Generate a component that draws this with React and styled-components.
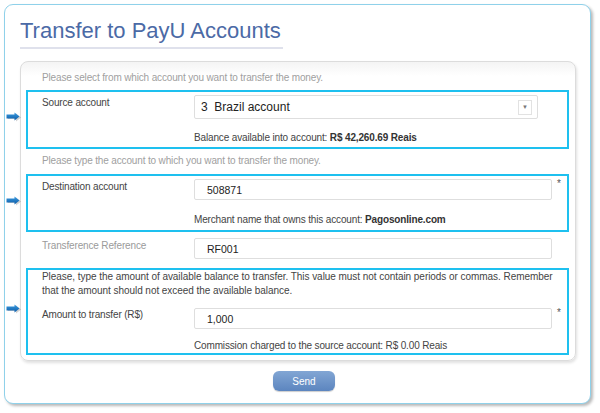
import styled, { createGlobalStyle } from "styled-components";

const GlobalStyle = createGlobalStyle`
  html, body {
    margin: 0;
    padding: 0;
    background: #ffffff;
  }
  body {
    font-family: "Liberation Sans", Arial, sans-serif;
    color: #444;
  }
`;

const Page = styled.div`
  padding: 4px 9px 11px 4px;
`;

const Card = styled.div`
  width: 587px;
  box-sizing: border-box;
  border: 1px solid #8fd1ea;
  border-radius: 9px;
  box-shadow: 2px 2px 3px rgba(0, 0, 0, 0.28);
  padding: 13px 14px 12px 15px;
  background: #fff;
`;

const Title = styled.h1`
  display: inline-block;
  margin: 0 0 12px 0;
  padding: 0 2px 3px 0;
  font-size: 22px;
  line-height: 26px;
  font-weight: normal;
  color: #4b6aa6;
  border-bottom: 2px solid #dfe1ec;
`;

const Panel = styled.div`
  border: 1px solid #dcdcdc;
  border-radius: 8px;
  background: linear-gradient(#f4f4f4, #fff 14px);
  box-shadow: 1px 2px 3px rgba(0, 0, 0, 0.12);
  padding: 9px 6px 5px 5px;
`;

const small = `
  font-size: 10px;
  letter-spacing: -0.15px;
  line-height: 14px;
`;

const Hint = styled.div`
  ${small}
  color: #a0a0a0;
  padding: ${(p) => p.$pad || "0 0 0 16px"};
`;

const Box = styled.div`
  position: relative;
  border: 2px solid #1ec0ef;
  padding: ${(p) => p.$pad || "3px 0 2px 14px"};
  margin-top: ${(p) => p.$top || "5px"};
`;

const Arrow = styled.svg`
  position: absolute;
  left: -22px;
  top: ${(p) => p.$top || "20px"};
`;

const Row = styled.div`
  display: grid;
  grid-template-columns: 152px ${(p) => p.$w || "358px"} 1fr;
  align-items: start;
  margin-top: ${(p) => p.$top || "0"};
  padding-left: ${(p) => p.$indent || "0"};
`;

const Label = styled.div`
  ${small}
  padding-top: ${(p) => p.$pt || "1px"};
  color: ${(p) => (p.$muted ? "#9a9a9a" : "#444")};
`;

const Input = styled.div`
  box-sizing: border-box;
  height: ${(p) => p.$h || "21px"};
  border: 1px solid #dedede;
  border-radius: 2px;
  background: #fff;
  padding: 0 12px;
  display: flex;
  align-items: center;
  font-size: ${(p) => p.$fs || "10.5px"};
  color: #222;
`;

const Select = styled(Input)`
  justify-content: space-between;
  padding: 0 5px 0 6px;
`;

const SelectBtn = styled.div`
  width: 12px;
  height: 13px;
  border: 1px solid #e2e2e2;
  display: flex;
  align-items: center;
  justify-content: center;
  font-size: 6px;
  color: #777;
`;

const Star = styled.span`
  font-size: 10px;
  color: #555;
  padding-left: 5px;
  line-height: 10px;
`;

const Info = styled.div`
  ${small}
  color: #444;
  margin-top: ${(p) => p.$top || "11px"};
  padding-left: 152px;

  b {
    color: #333;
  }
`;

const Notice = styled.div`
  ${small}
  letter-spacing: -0.05px;
  color: #444;
  padding-right: 9px;
`;

const Footer = styled.div`
  display: flex;
  justify-content: center;
  padding: 10px 0 0 12px;
`;

const Button = styled.button`
  width: 62px;
  height: 20px;
  border: none;
  border-radius: 6px;
  background: linear-gradient(#82a6d4, #5c85bf);
  box-shadow: 0 1px 1px rgba(0, 0, 0, 0.2);
  color: #fff;
  font-family: "Liberation Sans", Arial, sans-serif;
  font-size: 10px;
  padding: 0;
`;

function BlueArrow({ top }) {
  return (
    <Arrow $top={top} width="16" height="11" viewBox="0 0 16 11">
      <defs>
        <linearGradient id="ag" x1="0" y1="0" x2="0" y2="1">
          <stop offset="0" stopColor="#3a9be0" />
          <stop offset="1" stopColor="#0b5aa6" />
        </linearGradient>
      </defs>
      <path d="M2 4 H10 V1.5 L15 5.5 L10 9.5 V7 H2 Z" fill="rgba(0,0,0,0.18)" />
      <path d="M0.5 2.5 H8.5 V0.5 L13.5 4.5 L8.5 8.5 V6.5 H0.5 Z" fill="url(#ag)" />
    </Arrow>
  );
}

export default function App() {
  return (
    <>
      <GlobalStyle />
      <Page>
        <Card>
          <Title>Transfer to PayU Accounts</Title>
          <Panel>
            <Hint>Please select from which account you want to transfer the money.</Hint>
            <Box $top="5px" $pad="3px 0 2px 14px">
              <BlueArrow top="20px" />
              <Row $w="344px">
                <Label>Source account</Label>
                <Select $h="24px" $fs="12px">
                  <span>3&nbsp;&nbsp;Brazil account</span>
                  <SelectBtn>▼</SelectBtn>
                </Select>
              </Row>
              <Info $top="12px">
                Balance available into account: <b>R$ 42,260.69 Reais</b>
              </Info>
            </Box>
            <Hint $pad="5px 0 6px 16px">Please type the account to which you want to transfer the money.</Hint>
            <Box $top="0" $pad="3px 0 3px 14px">
              <BlueArrow top="20px" />
              <Row>
                <Label $pt="1px">Destination account</Label>
                <Input>508871</Input>
                <Star>*</Star>
              </Row>
              <Info $top="13px">
                Merchant name that owns this account: <b>Pagosonline.com</b>
              </Info>
            </Box>
            <Row $top="6px" $indent="16px">
              <Label $muted $pt="1px">Transference Reference</Label>
              <Input>RF001</Input>
            </Row>
            <Box $top="9px" $pad="0 0 0 14px">
              <BlueArrow top="34px" />
              <Notice>
                Please, type the amount of available balance to transfer. This value must not contain periods or commas. Remember that the amount should not exceed the available balance.
              </Notice>
              <Row $top="10px">
                <Label $pt="0">Amount to transfer (R$)</Label>
                <Input>1,000</Input>
                <Star>*</Star>
              </Row>
              <Info $top="10px">Commission charged to the source account: R$ 0.00 Reais</Info>
            </Box>
          </Panel>
          <Footer>
            <Button>Send</Button>
          </Footer>
        </Card>
      </Page>
    </>
  );
}
